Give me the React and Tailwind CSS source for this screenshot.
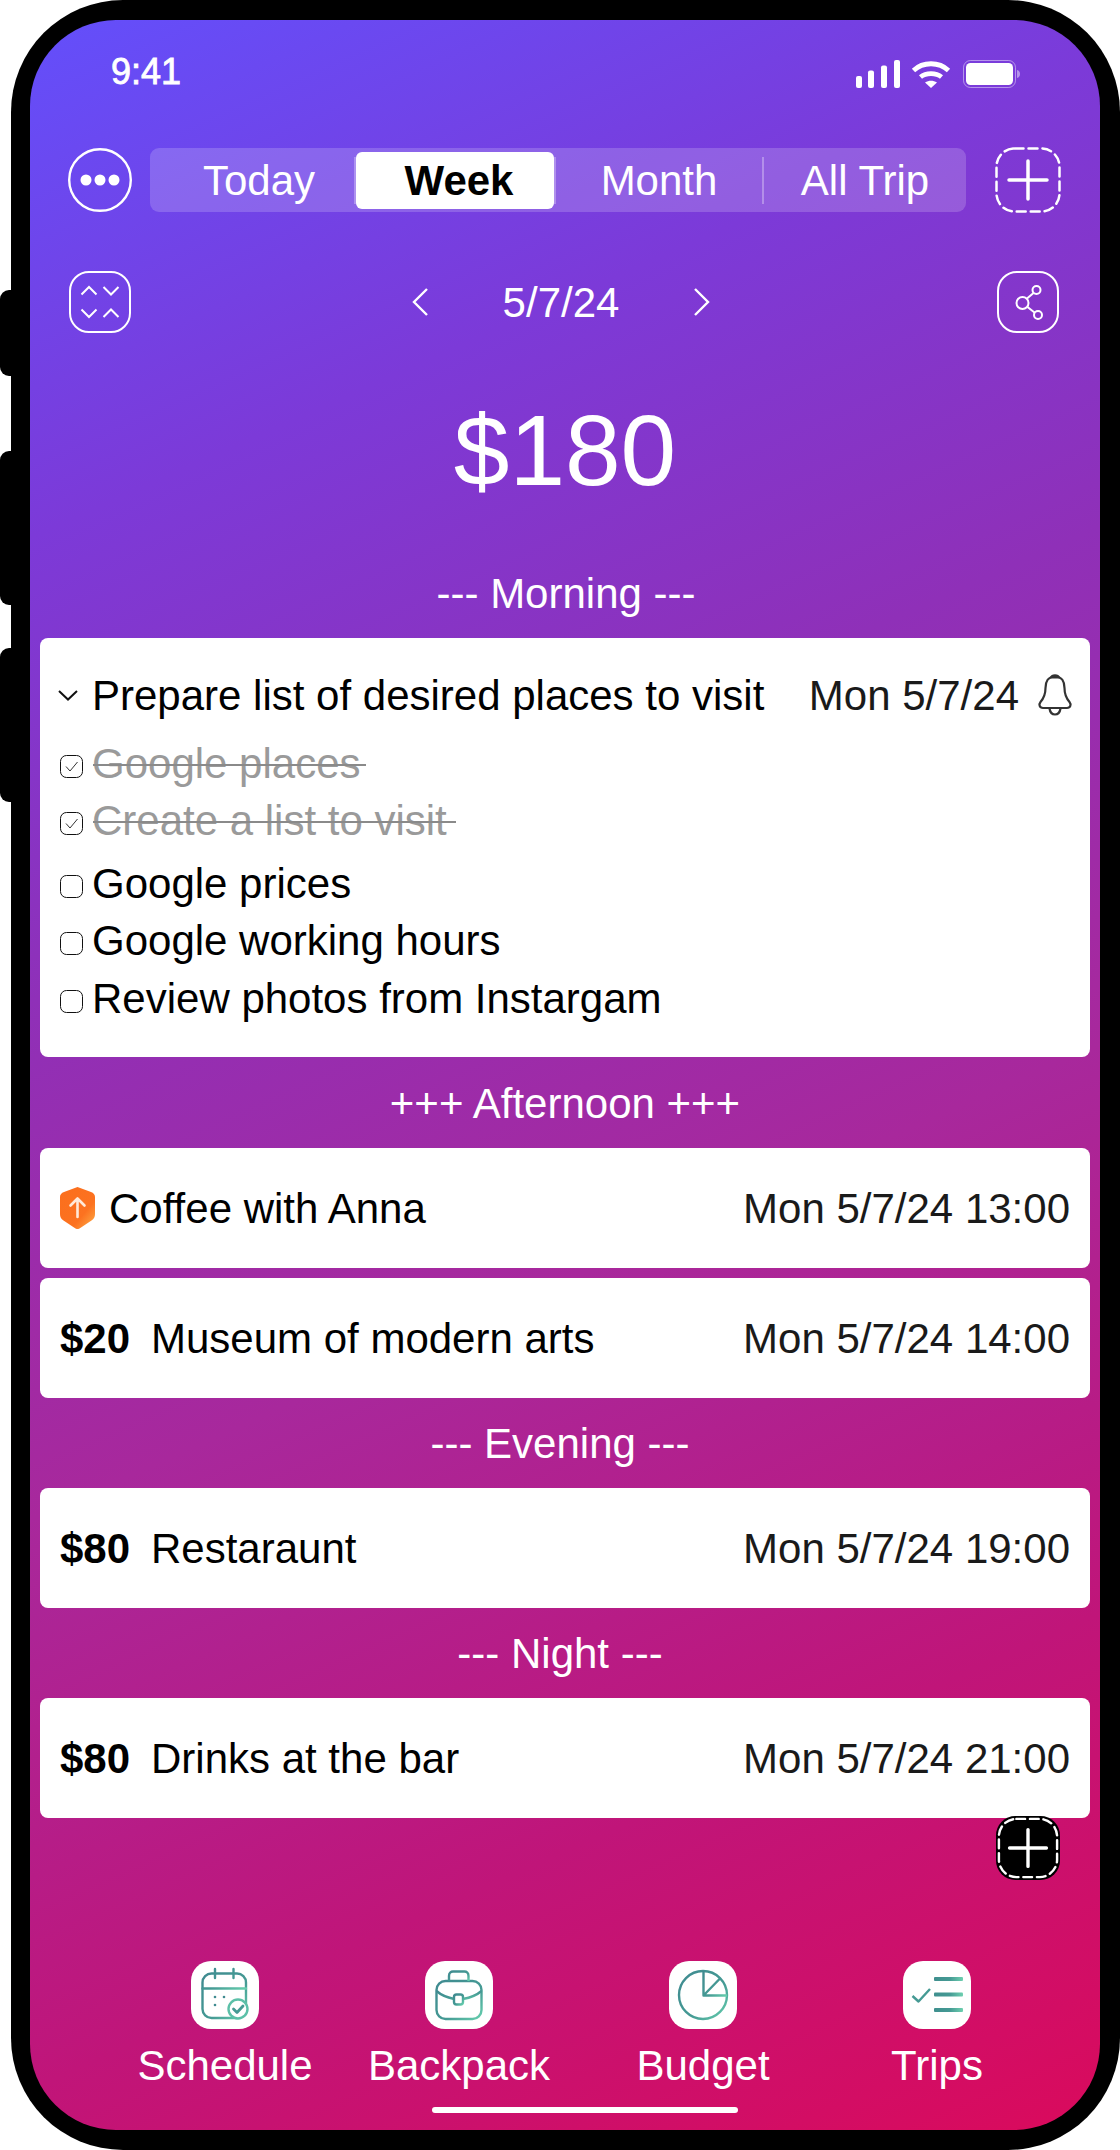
const font = { fontFamily: '"Liberation Sans", Arial, sans-serif' };

function TealGradient({ id }) {
  return (
    <defs>
      <linearGradient id={id} x1="0" y1="0" x2="1" y2="1">
        <stop offset="0%" stopColor="#3f8a90" />
        <stop offset="60%" stopColor="#459a94" />
        <stop offset="100%" stopColor="#66cfae" />
      </linearGradient>
    </defs>
  );
}

function Tile({ children }) {
  return (
    <div className="w-[68px] h-[68px] bg-white rounded-[20px]">
      <svg width="68" height="68" viewBox="0 0 68 68" fill="none">
        {children}
      </svg>
    </div>
  );
}

function CalendarIcon() {
  return (
    <Tile>
      <TealGradient id="tealCal" />
      <g stroke="url(#tealCal)" strokeWidth="2.4">
        <rect x="11.5" y="12.5" width="43.5" height="44.5" rx="9" />
        <path d="M11.5 27.5H55M24 8V17M42.5 8V17" strokeLinecap="round" />
      </g>
      <circle cx="24" cy="36" r="1.3" fill="#3f8a90" />
      <circle cx="33" cy="36" r="1.3" fill="#3f8a90" />
      <circle cx="24" cy="44" r="1.3" fill="#3f8a90" />
      <circle cx="47" cy="48" r="9.5" fill="white" stroke="#5cc0a8" strokeWidth="2.4" />
      <path d="M42.5 48L46 51.5L52 45" stroke="#459a94" strokeWidth="2.8" strokeLinecap="round" strokeLinejoin="round" />
    </Tile>
  );
}

function BackpackIcon() {
  return (
    <Tile>
      <TealGradient id="tealBag" />
      <g stroke="url(#tealBag)" strokeWidth="2.4" strokeLinejoin="round">
        <rect x="11.5" y="20" width="45" height="38" rx="9" />
        <path d="M24 20V15C24 12 26 10.5 28 10.5H39.5C41.5 10.5 43.5 12 43.5 15V20" />
        <path d="M11.5 30C16 34 22 36.5 29 38M56.5 30C52 34 46 36.5 38 38" />
        <rect x="29" y="33.5" width="9" height="10" rx="2.5" />
      </g>
    </Tile>
  );
}

function BudgetIcon() {
  return (
    <Tile>
      <TealGradient id="tealPie" />
      <g stroke="url(#tealPie)" strokeWidth="2.4" strokeLinejoin="round">
        <circle cx="34" cy="34" r="24" />
        <path d="M34.5 10V34.5H58M34.5 34.5L51 17.5" />
      </g>
    </Tile>
  );
}

function TripsIcon() {
  return (
    <Tile>
      <defs>
        <linearGradient id="tealBar" x1="0" y1="0" x2="1" y2="0">
          <stop offset="0%" stopColor="#3f8f8e" />
          <stop offset="55%" stopColor="#459a94" />
          <stop offset="100%" stopColor="#6ed0b0" />
        </linearGradient>
      </defs>
      <rect x="31" y="16" width="29" height="4" fill="url(#tealBar)" rx="1" />
      <rect x="31" y="31.5" width="29" height="4" fill="url(#tealBar)" rx="1" />
      <rect x="31" y="47" width="29" height="4" fill="url(#tealBar)" rx="1" />
      <path d="M9.5 35L15.5 40.5L27 28" stroke="#459a94" strokeWidth="2.4" strokeLinejoin="round" />
    </Tile>
  );
}

function BellIcon() {
  return (
    <svg width="36" height="44" viewBox="0 0 36 44" fill="none" stroke="#333" strokeWidth="2.2" strokeLinejoin="round">
      <path d="M18 3.5C11 3.5 8.5 9 8.5 15C8.5 22 7 25 3.5 29C1.5 31.5 2.5 35 6 35H30C33.5 35 34.5 31.5 32.5 29C29 25 27.5 22 27.5 15C27.5 9 25 3.5 18 3.5Z" />
      <path d="M12.5 35.5C13 39 15 41.5 18 41.5C21 41.5 23 39 23.5 35.5" />
      <path d="M14 4.5C15 1.5 21 1.5 22 4.5Z" fill="#333" />
    </svg>
  );
}

function ShieldIcon() {
  return (
    <svg width="35" height="42" viewBox="0 0 35 42" fill="none">
      <defs>
        <linearGradient id="shieldFill" x1="0.1" y1="0.1" x2="1" y2="1">
          <stop offset="0%" stopColor="#fb6f1d" />
          <stop offset="62%" stopColor="#fc7220" />
          <stop offset="100%" stopColor="#fdb04a" />
        </linearGradient>
      </defs>
      <path d="M17.5 0L31 5C33.5 6 35 7.5 35 10V27C35 30 34 32 31.5 33.5L19.5 41.5C18 42.3 17 42.3 15.5 41.5L3.5 33.5C1 32 0 30 0 27V10C0 7.5 1.5 6 4 5Z" fill="url(#shieldFill)" />
      <path d="M17.5 30V11.5M10.5 18.5L17.5 11.5L24.5 18.5" stroke="#ffe9d8" strokeWidth="2.6" strokeLinecap="round" strokeLinejoin="round" />
    </svg>
  );
}

function CheckBox({ checked }) {
  return (
    <svg className="mt-[5px] shrink-0" width="23" height="23" viewBox="0 0 23 23" fill="none" stroke="#111" strokeWidth="1">
      <rect x="0.5" y="0.5" width="22" height="22" rx="6" />
      {checked && <path d="M6 11.5L10 16L17.5 7" stroke="#333" />}
    </svg>
  );
}

function PlusDashed({ black }) {
  return (
    <svg width={black ? 64 : 66} height={black ? 64 : 66} viewBox="0 0 66 66" fill="none">
      {black && <rect x="0" y="0" width="66" height="66" rx="20" fill="#000" />}
      <rect
        x={black ? 3 : 1.5}
        y={black ? 3 : 1.5}
        width={black ? 60 : 63}
        height={black ? 60 : 63}
        rx="18"
        stroke="white"
        strokeWidth="2.5"
        strokeDasharray="9 5"
        strokeLinecap="round"
      />
      <path d="M14 33H52M33 14V52" stroke="white" strokeWidth="3.5" strokeLinecap="round" />
    </svg>
  );
}

function SectionLabel({ children, className }) {
  return <div className={`text-white text-center text-[42px] ${className}`}>{children}</div>;
}

function EventCard({ price, title, when, icon }) {
  return (
    <div className="h-[120px] bg-white rounded-[8px] flex items-center pl-[20px] pr-[20px] text-[42px] text-black">
      {icon && <div className="mr-[14px] flex">{icon}</div>}
      {price && <span className="font-bold w-[91px]">{price}</span>}
      <span>{title}</span>
      <span className="ml-auto text-[#1a1a1a]">{when}</span>
    </div>
  );
}

function TaskRow({ done, label, strike, className = "" }) {
  return (
    <div className={`h-[57px] flex items-center pl-[20px] ${className}`}>
      <CheckBox checked={done} />
      <span className={`relative ml-[9px] ${done ? "text-[#9a9a9a]" : "text-black"}`}>
        {label}
        {done && <span style={{ width: strike }} className="absolute left-[1px] top-[29px] h-[2px] bg-[#8a8a8a]" />}
      </span>
    </div>
  );
}

function NavItem({ icon, label, className }) {
  return (
    <div className={`w-[200px] flex flex-col items-center ${className}`}>
      {icon}
      <span className="mt-[12px] h-[50px] leading-[50px] text-white text-[42px] whitespace-nowrap">{label}</span>
    </div>
  );
}

export default function App() {
  return (
    <div style={font} className="relative w-[1120px] h-[2150px] bg-white overflow-hidden">
      <div className="absolute left-0 top-[290px] w-[20px] h-[86px] bg-black rounded-l-[9px]" />
      <div className="absolute left-0 top-[451px] w-[20px] h-[154px] bg-black rounded-l-[9px]" />
      <div className="absolute left-0 top-[648px] w-[20px] h-[154px] bg-black rounded-l-[9px]" />

      <div className="ml-[11px] w-[1109px] h-[2150px] bg-black rounded-[112px] pl-[19px] pt-[20px]">
        <div className="w-[1070px] h-[2110px] rounded-[86px] overflow-hidden flex flex-col bg-[linear-gradient(156deg,#634ffb_0%,#7c3ad8_20%,#8f30b8_38%,#a8289c_58%,#c01579_80%,#da0a5c_100%)]">
          {/* status bar */}
          <div className="h-[128px] shrink-0 flex items-start pt-[31px] text-white">
            <span className="ml-[81px] text-[36px] leading-[42px] [-webkit-text-stroke:0.8px_white]">9:41</span>
            <svg className="ml-[675px] mt-[9px]" width="44" height="28" viewBox="0 0 44 28" fill="white">
              <rect x="0" y="16" width="6" height="12" rx="2" />
              <rect x="12" y="10.5" width="6" height="17.5" rx="2" />
              <rect x="25" y="5.5" width="6" height="22.5" rx="2" />
              <rect x="38" y="0" width="6" height="28" rx="2" />
            </svg>
            <svg className="ml-[11px] mt-[9px]" width="40" height="28" viewBox="0 0 40 28" fill="none" stroke="white" strokeWidth="4.8">
              <path d="M2.5 10.5C12 1.5 28 1.5 37.5 10.5" />
              <path d="M9.5 17C15 12.5 25 12.5 30.5 17" />
              <path d="M14 22.5L20 28L26 22.5C22 20 18 20 14 22.5Z" fill="white" stroke="none" />
            </svg>
            <svg className="ml-[12px] mt-[9px]" width="58" height="28" viewBox="0 0 58 28" fill="none">
              <rect x="0.5" y="0.5" width="52" height="27" rx="7" stroke="white" strokeOpacity="0.45" />
              <rect x="3" y="3" width="47" height="22" rx="4.5" fill="white" />
              <path d="M54 10C56 10.5 57 12 57 14C57 16 56 17.5 54 18Z" fill="white" fillOpacity="0.45" />
            </svg>
          </div>

          {/* period tabs */}
          <div className="h-[64px] shrink-0 flex items-center">
            <svg className="ml-[38px]" width="64" height="64" viewBox="0 0 64 64" fill="none">
              <circle cx="32" cy="32" r="30.8" stroke="white" strokeWidth="2.4" />
              <circle cx="18" cy="32" r="5.5" fill="white" />
              <circle cx="32" cy="32" r="5.5" fill="white" />
              <circle cx="46" cy="32" r="5.5" fill="white" />
            </svg>
            <div className="ml-[18px] w-[816px] h-[64px] rounded-[9px] bg-white/[0.18] flex items-center text-white text-[42px]">
              <span className="w-[204px] pl-[14px] text-center">Today</span>
              <span className="w-[2px] h-[47px] bg-white/30" />
              <div className="w-[198px] h-[57px] pl-[8px] bg-white rounded-[6px] text-black font-bold flex items-center justify-center">Week</div>
              <span className="w-[2px] h-[47px] bg-white/30" />
              <span className="w-[206px] text-center">Month</span>
              <span className="w-[2px] h-[47px] bg-white/30" />
              <span className="w-[202px] text-center">All Trip</span>
            </div>
            <div className="ml-[29px] flex">
              <PlusDashed />
            </div>
          </div>

          {/* date row */}
          <div className="mt-[59px] h-[62px] shrink-0 flex items-center text-white">
            <svg className="ml-[39px]" width="62" height="62" viewBox="0 0 62 62" fill="none" stroke="white" strokeWidth="2">
              <rect x="1" y="1" width="60" height="60" rx="19" />
              <path d="M12.5 23.5L20 16L27.5 23.5M34.5 16L42 23.5L49.5 16M12.5 38.500L20 46L27.5 38.500M34.5 46L42 38.500L49.5 46" />
            </svg>
            <svg className="ml-[281px]" width="16" height="28" viewBox="0 0 16 28" fill="none" stroke="white" strokeWidth="2.4">
              <path d="M15 1L2 14L15 27" />
            </svg>
            <span className="ml-[73px] w-[120px] text-center text-[42px]">5/7/24</span>
            <svg className="ml-[73px]" width="16" height="28" viewBox="0 0 16 28" fill="none" stroke="white" strokeWidth="2.4">
              <path d="M1 1L14 14L1 27" />
            </svg>
            <svg className="ml-[287px]" width="62" height="62" viewBox="0 0 62 62" fill="none" stroke="white" strokeWidth="2">
              <rect x="1" y="1" width="60" height="60" rx="19" />
              <circle cx="39.5" cy="19" r="4" />
              <circle cx="25.5" cy="32" r="6" />
              <circle cx="41" cy="44" r="4" />
              <path d="M36.5 22L30 27.5M30.5 36L37.5 41.5" />
            </svg>
          </div>

          {/* total */}
          <div className="h-[234px] shrink-0 flex items-center justify-center text-white text-[100px]">$180</div>

          <SectionLabel className="h-[71px] pl-[2px] leading-[54px]">--- Morning ---</SectionLabel>

          {/* cards */}
          <div className="mx-[10px] flex flex-col">
            <div className="h-[419px] bg-white rounded-[8px] pt-[26px] text-[42px] leading-[57px]">
              <div className="h-[62px] flex items-center pl-[18px] pr-[17px] text-black">
                <svg width="20" height="11" viewBox="0 0 20 11" fill="none" stroke="#111" strokeWidth="2">
                  <path d="M1 1L10 9.5L19 1" />
                </svg>
                <span className="ml-[14px]">Prepare list of desired places to visit</span>
                <span className="ml-auto text-[#1a1a1a]">Mon 5/7/24</span>
                <div className="ml-[18px] flex">
                  <BellIcon />
                </div>
              </div>
              <div className="mt-[9px]">
                <TaskRow done label={"Google places\u00a0"} strike={273} />
                <TaskRow done label={"Create a list to visit\u00a0"} strike={363} />
                <TaskRow className="mt-[6px]" label="Google prices" />
                <TaskRow label="Google working hours" />
                <TaskRow className="mt-[1px]" label="Review photos from Instargam" />
              </div>
            </div>

            <SectionLabel className="h-[91px] leading-[94px]">+++ Afternoon +++</SectionLabel>
            <EventCard icon={<ShieldIcon />} title="Coffee with Anna" when="Mon 5/7/24 13:00" />
            <div className="h-[10px]" />
            <EventCard price="$20" title="Museum of modern arts" when="Mon 5/7/24 14:00" />

            <SectionLabel className="h-[90px] pr-[10px] leading-[92px]">--- Evening ---</SectionLabel>
            <EventCard price="$80" title="Restaraunt" when="Mon 5/7/24 19:00" />

            <SectionLabel className="h-[90px] pr-[10px] leading-[92px]">--- Night ---</SectionLabel>
            <EventCard price="$80" title="Drinks at the bar" when="Mon 5/7/24 21:00" />
          </div>

          {/* floating add */}
          <div className="-mt-[2px] self-end mr-[40px] h-[64px] flex">
            <PlusDashed black />
          </div>

          {/* bottom nav */}
          <div className="mt-[81px] flex">
            <NavItem className="ml-[95px]" icon={<CalendarIcon />} label="Schedule" />
            <NavItem className="ml-[34px]" icon={<BackpackIcon />} label="Backpack" />
            <NavItem className="ml-[44px]" icon={<BudgetIcon />} label="Budget" />
            <NavItem className="ml-[34px]" icon={<TripsIcon />} label="Trips" />
          </div>
          <div className="mt-[16px] ml-[402px] w-[306px] h-[6px] rounded-full bg-white" />
        </div>
      </div>
    </div>
  );
}
